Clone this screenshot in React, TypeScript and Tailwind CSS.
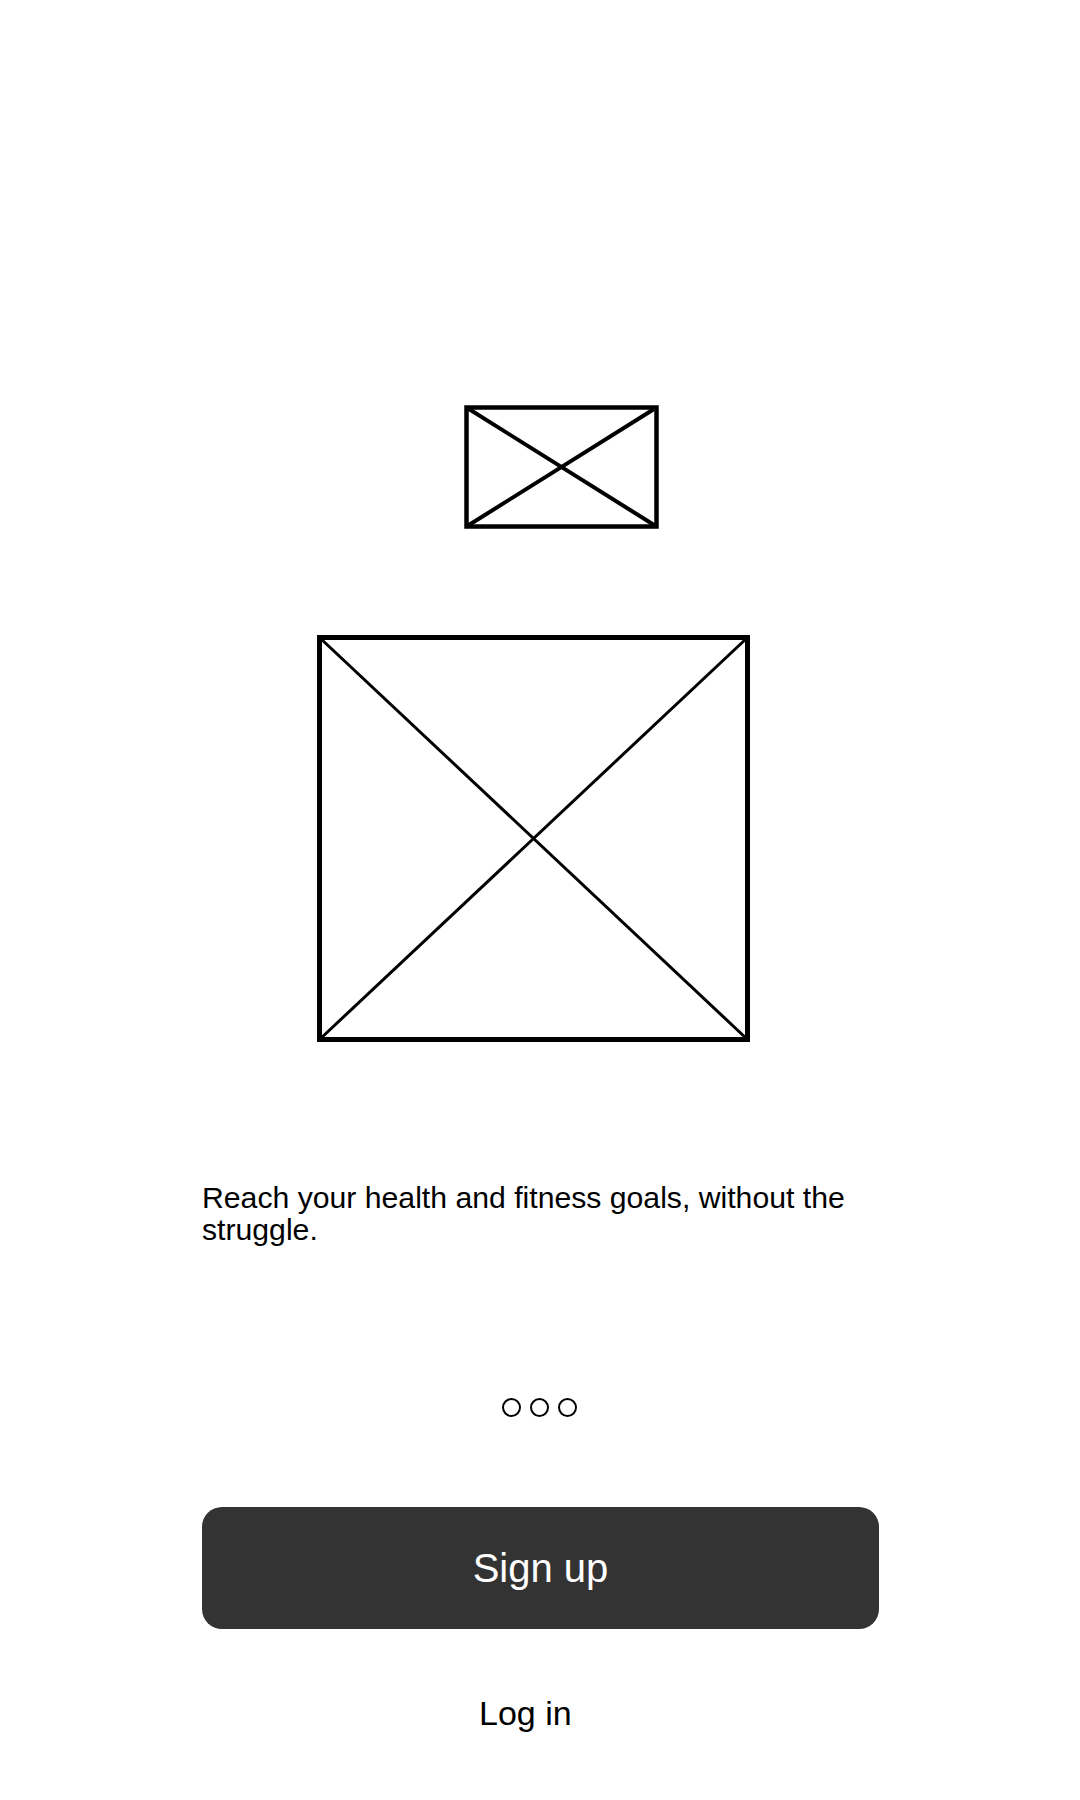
import React from "react";

function PlaceholderSmall() {
  return (
    <svg width="195" height="124" viewBox="0 0 195 124" className="block">
      <rect x="2.5" y="2.5" width="190" height="119" fill="none" stroke="#000" strokeWidth="4.5" />
      <line x1="2.5" y1="2.5" x2="192.5" y2="121.5" stroke="#000" strokeWidth="4" />
      <line x1="192.5" y1="2.5" x2="2.5" y2="121.5" stroke="#000" strokeWidth="4" />
    </svg>
  );
}

function PlaceholderLarge() {
  return (
    <svg width="433" height="407" viewBox="0 0 433 407" className="block">
      <rect x="2.5" y="2.5" width="428" height="402" fill="none" stroke="#000" strokeWidth="5" />
      <line x1="2.5" y1="2.5" x2="430.5" y2="404.5" stroke="#000" strokeWidth="3" />
      <line x1="430.5" y1="2.5" x2="2.5" y2="404.5" stroke="#000" strokeWidth="3" />
    </svg>
  );
}

export default function App() {
  return (
    <div
      className="w-[1080px] h-[1800px] bg-white overflow-hidden"
      style={{ fontFamily: '"Liberation Sans", Arial, sans-serif' }}
    >
      <div className="ml-[202px] w-[677px] flex flex-col pt-[405px]">
        <div className="ml-[262px]">
          <PlaceholderSmall />
        </div>
        <div className="ml-[115px] mt-[106px]">
          <PlaceholderLarge />
        </div>
        <p className="mt-[140px] text-[30.2px] leading-[32px] text-black">
          Reach your health and fitness goals, without the struggle.
        </p>
        <div className="mt-[152px] flex justify-center gap-[9px] pr-[2px]">
          <span className="w-[19px] h-[19px] rounded-full border-[2.5px] border-black" />
          <span className="w-[19px] h-[19px] rounded-full border-[2.5px] border-black" />
          <span className="w-[19px] h-[19px] rounded-full border-[2.5px] border-black" />
        </div>
        <button className="mt-[90px] h-[122px] w-full rounded-[20px] bg-[#333333] text-white text-[40px] leading-none flex items-center justify-center">
          Sign up
        </button>
        <button className="mt-[67px] ml-[277px] self-start text-[34px] leading-none text-black">
          Log in
        </button>
      </div>
    </div>
  );
}
